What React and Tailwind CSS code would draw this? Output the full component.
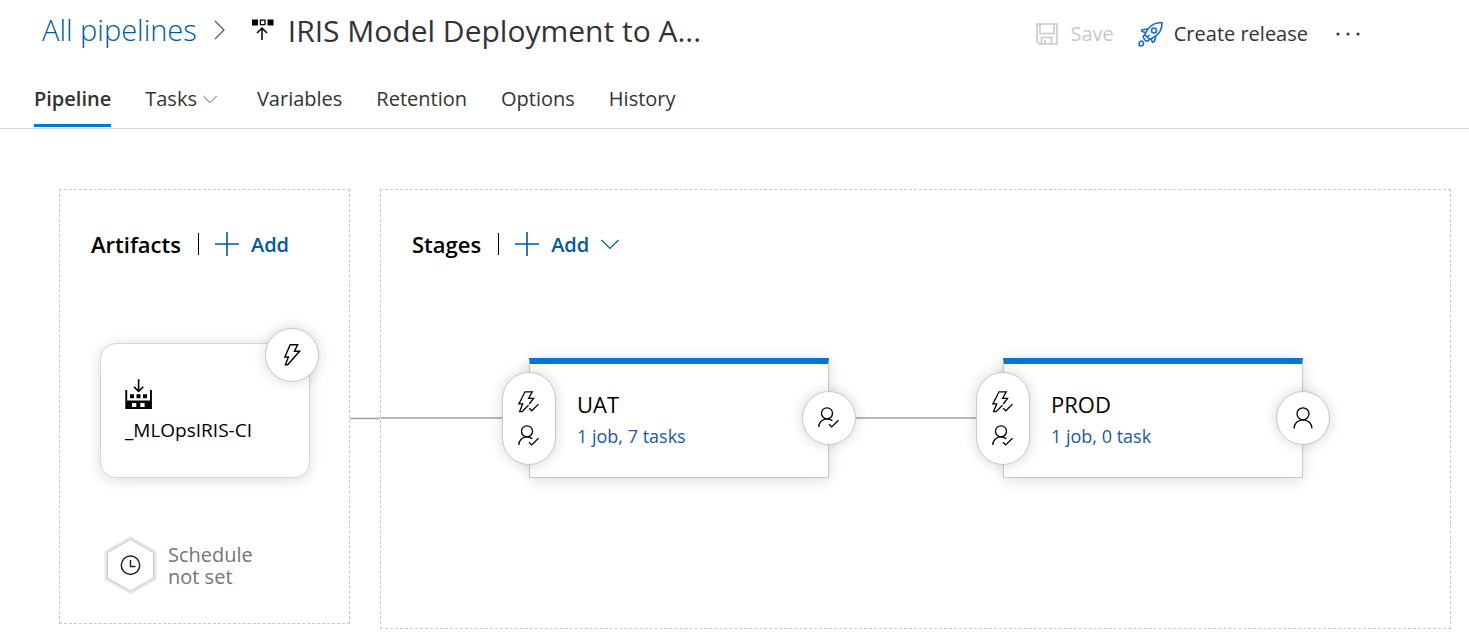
import React from "react";

function ReleaseIcon() {
  return (
    <svg width="22" height="22" viewBox="0 0 22 22" aria-hidden="true">
      <path d="M0 .5h6v6H0zM15.500 .5h6v6h-6z" fill="#000" />
      <path d="M8.400 1.100h4.600v4.600H8.400z" fill="none" stroke="#000" strokeWidth="1.3" />
      <path d="M10 21V9.500M5 14l5-5 5 5" fill="none" stroke="#000" strokeWidth="1.5" />
    </svg>
  );
}

function SaveIcon() {
  return (
    <svg width="22" height="22" viewBox="0 0 22 22" fill="none" stroke="#c8c8c8" strokeWidth="1.6" aria-hidden="true">
      <path d="M1 1h20v20H3.500L1 18.500zM4 1v9.500h14V1M5.500 21v-6.500h10V21M9 17v4" />
    </svg>
  );
}

function RocketIcon() {
  return (
    <svg width="26" height="26" viewBox="0 0 26 26" fill="none" stroke="#1b6ec2" strokeWidth="1.6" strokeLinejoin="round" aria-hidden="true">
      <path d="M24 1.500c-6-.2-10.500 2-13.800 6.300-1.500 2-2.600 3.900-3.400 6l4.700 4.700c2.100-.7 4.100-1.800 6-3.300C22 11.800 24.300 7.500 24 1.500z" />
      <circle cx="16" cy="9.500" r="2.500" />
      <path d="M10 8L4 8.800l-.4 1.200 4.100 2M17.800 15.300L16.500 20.300l-2 1-1.500-3.400M6.800 13.800L5 15.500l1 2.300M11.500 18.500l-1.800 1.800-2.500-.8M6 17.800l1.200 1.700M9 16.300l2.500-2.500" />
      <path d="M1.200 24.800v-3c.5-1.800 2.700-2.200 3.700-1s.7 3.300-1 4z" />
    </svg>
  );
}

function ChevronDown({ className = "", color = "#555" }) {
  return (
    <svg width="18" height="11" viewBox="0 0 18 11" fill="none" stroke={color} strokeWidth="1.2" className={className} aria-hidden="true">
      <path d="M.5 1l8.500 8.500L17.500 1" />
    </svg>
  );
}

function PlusIcon() {
  return (
    <svg width="24" height="24" viewBox="0 0 24 24" fill="none" stroke="#005a9e" strokeWidth="1.6" aria-hidden="true">
      <path d="M12 0v24M0 12h24" />
    </svg>
  );
}

function BoltIcon() {
  return (
    <svg width="17" height="22" viewBox="0 0 17 22" fill="none" stroke="#000" strokeWidth="1.4" aria-hidden="true">
      <path d="M6.200 .8h7.500L10.400 7.300h5.200L3.700 20.800H1.400L4.400 13H.9z" />
    </svg>
  );
}

function BoltCheckIcon() {
  return (
    <svg width="22" height="22" viewBox="0 0 22 22" fill="none" stroke="#000" strokeWidth="1.3" aria-hidden="true">
      <path d="M10.500 14.200l-6.500 6.400H1.600L4.700 12.800H1L7 .8h7.300L10.600 7.300h5L11.200 13" />
      <path d="M11.200 17.200l2.600 2.600 6.700-6.700" />
    </svg>
  );
}

function PersonCheckIcon() {
  return (
    <svg width="22" height="22" viewBox="0 0 22 22" fill="none" stroke="#000" strokeWidth="1.3" aria-hidden="true">
      <circle cx="9" cy="6.300" r="5.500" />
      <path d="M.8 20c0-4.600 3.400-8.200 8.200-8.200 2.200 0 4 .7 5.300 2M11 17.200l2.700 2.700 6.800-6.700" />
    </svg>
  );
}

function PersonIcon() {
  return (
    <svg width="20" height="22" viewBox="0 0 20 22" fill="none" stroke="#000" strokeWidth="1.3" aria-hidden="true">
      <circle cx="10" cy="6.800" r="6" />
      <path d="M1 21.500c0-5 4-8.700 9-8.700s9 3.700 9 8.700" />
    </svg>
  );
}

function BuildIcon() {
  return (
    <svg width="27" height="30" viewBox="0 0 27 30" aria-hidden="true">
      <path fillRule="evenodd" d="M.3 11h1.900v10.500H25V11h1.900v19H.3zM7 24h4.300v4H7zM15.300 24h4.300v4h-4.300z" fill="#000" />
      <path d="M5 15.300h4v4H5zM11.500 15.300h4v4h-4zM18 15.300h4v4h-4z" fill="#000" />
      <path d="M13.600 .3V12M8.900 7.700l4.700 4.700 4.700-4.700" fill="none" stroke="#000" strokeWidth="1.6" />
    </svg>
  );
}

function ScheduleIcon() {
  return (
    <svg width="54" height="60" viewBox="0 0 54 60" fill="none" aria-hidden="true">
      <path d="M26.500 3L51 16.800v27L26.500 57.500 2 43.800v-27z" stroke="#e6e6e6" strokeWidth="3" />
      <path d="M26.500 4.500L49.500 17.500v25.500L26.500 56 3.500 43V17.500z" fill="#fff" stroke="#c8c8c8" />
      <circle cx="26.500" cy="30.300" r="9.200" stroke="#222" strokeWidth="1.5" />
      <path d="M26.500 25v6.500h5" stroke="#222" strokeWidth="1.4" />
    </svg>
  );
}

const badge =
  "flex flex-col items-center justify-center rounded-full border border-[#c8c8c8] bg-white shadow-[0_0_14px_rgba(0,0,0,0.16)]";

function PanelHeading({ title, menu }) {
  return (
    <div className="flex h-7 items-center pl-[31px]">
      <h2 className="pt-px text-[22px] font-semibold text-black">{title}</h2>
      <span className="ml-[17px] mr-4 h-[22px] w-px bg-black" />
      <button type="button" className="flex items-center gap-3 text-[20px] font-semibold text-[#005a9e]">
        <PlusIcon />
        <span className="pt-px">Add</span>
        {menu && <ChevronDown color="#005a9e" />}
      </button>
    </div>
  );
}

function Stage({ name, summary, after }) {
  return (
    <div className="relative h-[120px] w-[300px] shrink-0 border border-t-[6px] border-[#c8c8c8] border-t-[#0078d4] bg-white pl-[47px] pt-6 shadow-[0_2px_14px_rgba(0,0,0,0.14)]">
      <h3 className="text-[22px] leading-[32px] text-black">{name}</h3>
      <a href="#tasks" className="block text-[18px] leading-[32px] text-[#1b5a9e]">{summary}</a>
      <button type="button" aria-label={`${name} pre-deployment conditions`} className={`${badge} absolute -left-[28px] top-2 h-[93px] w-[54px] gap-3`}>
        <BoltCheckIcon />
        <PersonCheckIcon />
      </button>
      <button type="button" aria-label={`${name} post-deployment conditions`} className={`${badge} absolute -right-[28px] top-[27px] size-[54px]`}>
        {after}
      </button>
    </div>
  );
}

const tabs = ["Variables", "Retention", "Options", "History"];

export default function App() {
  return (
    <div className="min-h-screen bg-white font-['Open_Sans','Noto_Sans',sans-serif] text-[#333]">
      <header className="border-b border-[#d6d6d6]">
        <div className="flex h-[60px] items-center justify-between pl-[42px] pr-[108px]">
          <div className="flex items-center">
            <a href="#pipelines" className="text-[29px] font-light text-[#005a9e]">All pipelines</a>
            <svg width="12" height="20" viewBox="0 0 12 20" fill="none" stroke="#555" strokeWidth="1.2" className="ml-[17px] mr-[26px]" aria-hidden="true">
              <path d="M1 1l9 9-9 9" />
            </svg>
            <ReleaseIcon />
            <h1 className="ml-[14px] text-[30px]">IRIS Model Deployment to A...</h1>
          </div>
          <div className="flex items-center pt-2 text-[20px]">
            <button type="button" disabled className="flex items-center gap-3 text-[#c8c8c8]">
              <SaveIcon />
              Save
            </button>
            <button type="button" className="ml-6 flex items-center gap-[10px]">
              <RocketIcon />
              Create release
            </button>
            <button type="button" aria-label="More actions" className="ml-[27px]">
              <svg width="26" height="6" viewBox="0 0 26 6" fill="#333" aria-hidden="true">
                <circle cx="3" cy="3" r="1.5" />
                <circle cx="13" cy="3" r="1.5" />
                <circle cx="23" cy="3" r="1.5" />
              </svg>
            </button>
          </div>
        </div>
        <nav className="flex h-[68px] items-start gap-[34px] pl-[34px] text-[20px]">
          <a href="#pipeline" className="h-[67px] border-b-[3px] border-[#0078d4] pt-6 font-semibold">Pipeline</a>
          <button type="button" className="mr-[6px] flex items-center gap-[6px] pt-6">
            Tasks
            <ChevronDown className="h-[9px] w-[14px]" />
          </button>
          {tabs.map((t) => (
            <a key={t} href={`#${t.toLowerCase()}`} className="pt-6">{t}</a>
          ))}
        </nav>
      </header>

      <main className="flex items-start pb-3 pl-[59px] pr-[18px] pt-[60px]">
        <section className="h-[435px] w-[291px] shrink-0 border border-dashed border-[#c8c8c8] pt-10">
          <PanelHeading title="Artifacts" />
          <div className="relative ml-10 mt-[85px] h-[135px] w-[210px] rounded-2xl border border-[#d6d6d6] bg-white pl-6 pt-[35px] shadow-[0_2px_14px_rgba(0,0,0,0.14)]">
            <BuildIcon />
            <a href="#artifact" className="mt-2 block text-[19px] leading-[26px] text-black">_MLOpsIRIS-CI</a>
            <button type="button" aria-label="Continuous deployment trigger" className={`${badge} absolute -right-[10px] -top-4 size-[54px]`}>
              <BoltIcon />
            </button>
          </div>
          <button type="button" className="ml-11 mt-[57px] flex items-center gap-[10px] text-left text-[20px] leading-[22px] text-[#767676]">
            <ScheduleIcon />
            <span className="pt-px">Schedule<br />not set</span>
          </button>
        </section>
        <div className="mt-[228px] h-[3px] w-[30px] shrink-0 border-y border-[#e6e6e6] bg-[#a0a0a0]" />
        <section className="h-[440px] min-w-0 flex-1 border border-dashed border-[#c8c8c8] pt-10">
          <PanelHeading title="Stages" menu />
          <div className="mt-[100px] flex items-center">
            <div className="h-[2px] w-[148px] shrink-0 bg-[#b8b8b8]" />
            <Stage name="UAT" summary="1 job, 7 tasks" after={<PersonCheckIcon />} />
            <div className="h-[2px] w-[174px] shrink-0 bg-[#b8b8b8]" />
            <Stage name="PROD" summary="1 job, 0 task" after={<PersonIcon />} />
          </div>
        </section>
      </main>
    </div>
  );
}
